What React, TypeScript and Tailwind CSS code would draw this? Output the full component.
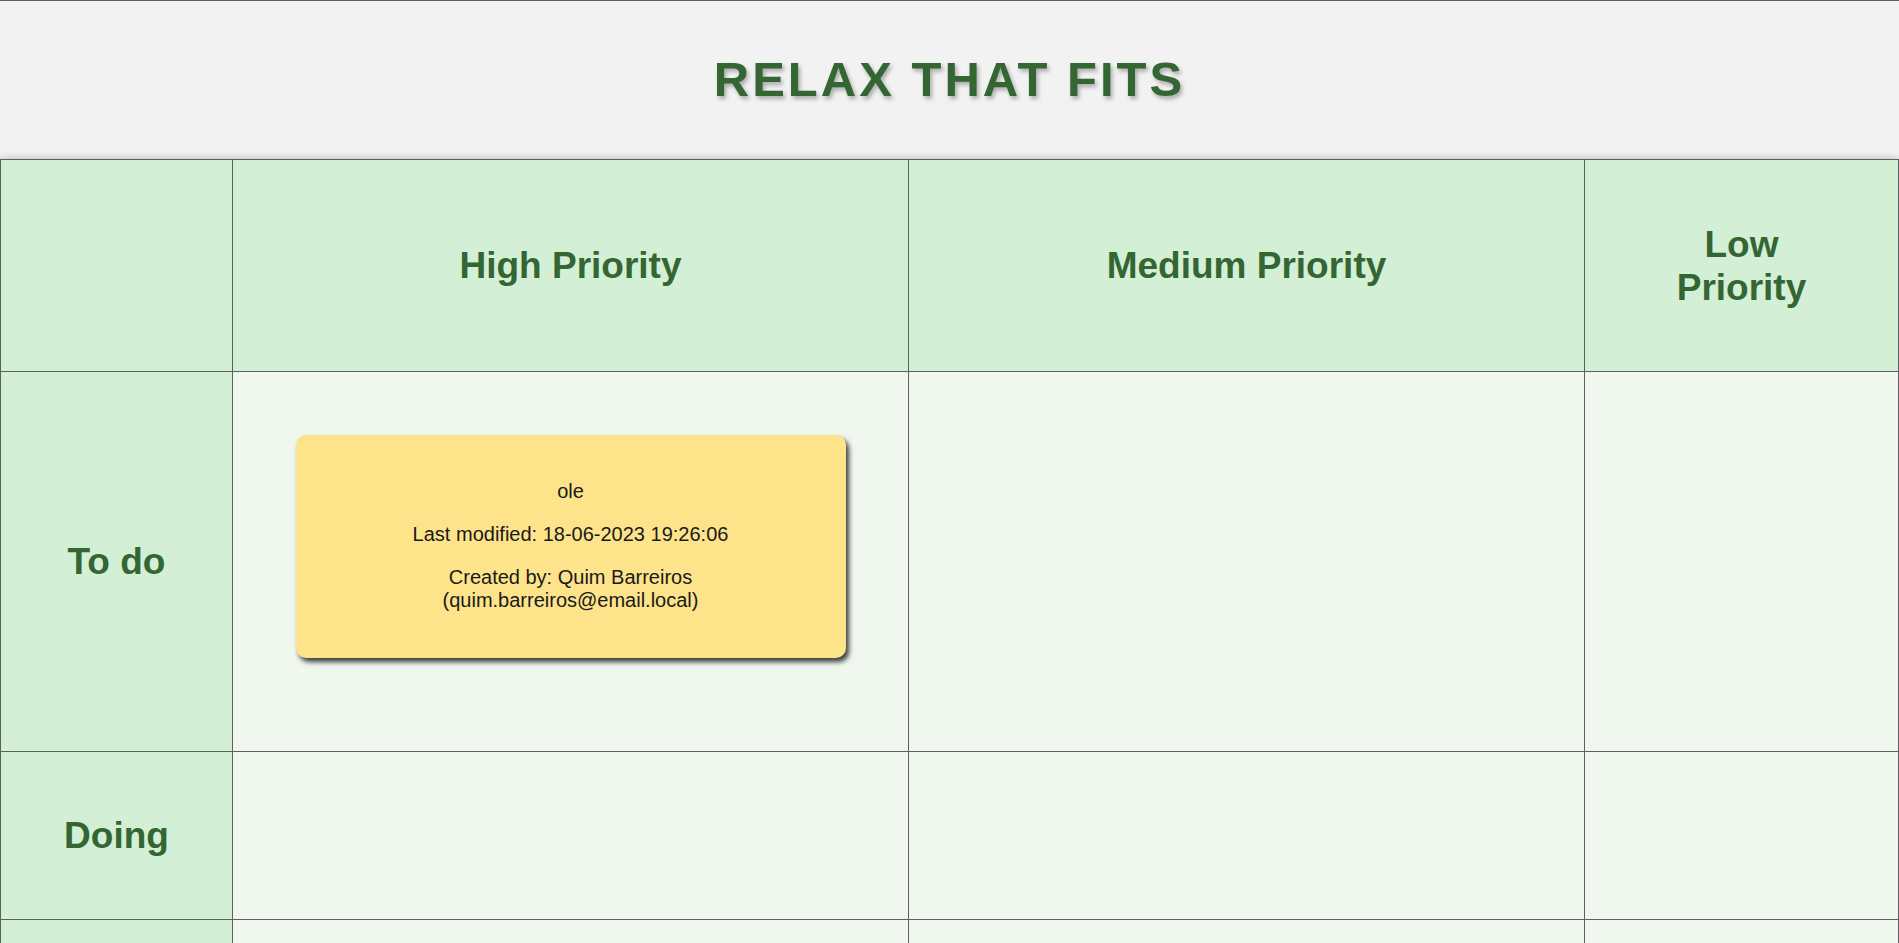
import type { ReactNode } from 'react'

const cols = [
  { name: 'High Priority', wrap: '' },
  { name: 'Medium Priority', wrap: '' },
  { name: 'Low Priority', wrap: 'max-w-[200px]' },
]

type Row = { label: string; height: string }

const rows: Row[] = [
  { label: 'To do', height: 'h-[380px]' },
  { label: 'Doing', height: 'h-[168px]' },
  { label: '', height: 'h-[168px]' },
]

function HeadCell({ children }: { children: ReactNode }) {
  return (
    <div className="flex items-center justify-center border-r border-b border-[#5f5f5f] bg-[#d3efd5] text-center text-[37px] font-bold leading-[43px] text-[#336633]">
      {children}
    </div>
  )
}

function Card() {
  return (
    <div className="mx-auto mt-[63px] flex w-[550px] flex-col gap-5 rounded-[10px] bg-[#fde38a] px-6 pt-[45px] pb-[46px] text-center text-[20px] leading-[23px] text-[#1a1a1a] shadow-[3px_4px_5px_rgba(0,0,0,0.75)]">
      <p>ole</p>
      <p>Last modified: 18-06-2023 19:26:06</p>
      <p>
        Created by: Quim Barreiros
        <br />
        (quim.barreiros@email.local)
      </p>
    </div>
  )
}

export default function App() {
  return (
    <div className="h-[943px] w-full overflow-hidden bg-white font-['Liberation_Sans',Arial,sans-serif]">
      {/* Title bar */}
      <header className="flex h-[159px] items-center justify-center border-t border-[#5f5f5f] bg-[#f2f2f2]">
        <h1 className="text-[49px] font-bold tracking-[3px] text-[#336633] [text-shadow:2px_3px_4px_rgba(0,0,0,0.3)]">
          RELAX THAT FITS
        </h1>
      </header>

      {/* Board */}
      <div className="grid grid-cols-[232px_676px_676px_314px] border-t border-l border-[#5f5f5f] shadow-[0_0_8px_rgba(0,0,0,0.25)]">
        <div className="h-[212px] border-r border-b border-[#5f5f5f] bg-[#d3efd5]" />
        {cols.map((c) => (
          <HeadCell key={c.name}>
            <span className={`${c.wrap} px-2`}>{c.name}</span>
          </HeadCell>
        ))}

        {rows.map((r, i) => (
          <div key={i} className="contents">
            <div
              className={`${r.height} flex items-center justify-center border-r border-b border-[#5f5f5f] bg-[#d3efd5] text-[37px] font-bold text-[#336633]`}
            >
              {r.label}
            </div>
            {cols.map((c, j) => (
              <div
                key={c.name}
                className={`${r.height} border-r border-b border-[#5f5f5f] bg-[#f0f7ef]`}
              >
                {i === 0 && j === 0 && <Card />}
              </div>
            ))}
          </div>
        ))}
      </div>
    </div>
  )
}
